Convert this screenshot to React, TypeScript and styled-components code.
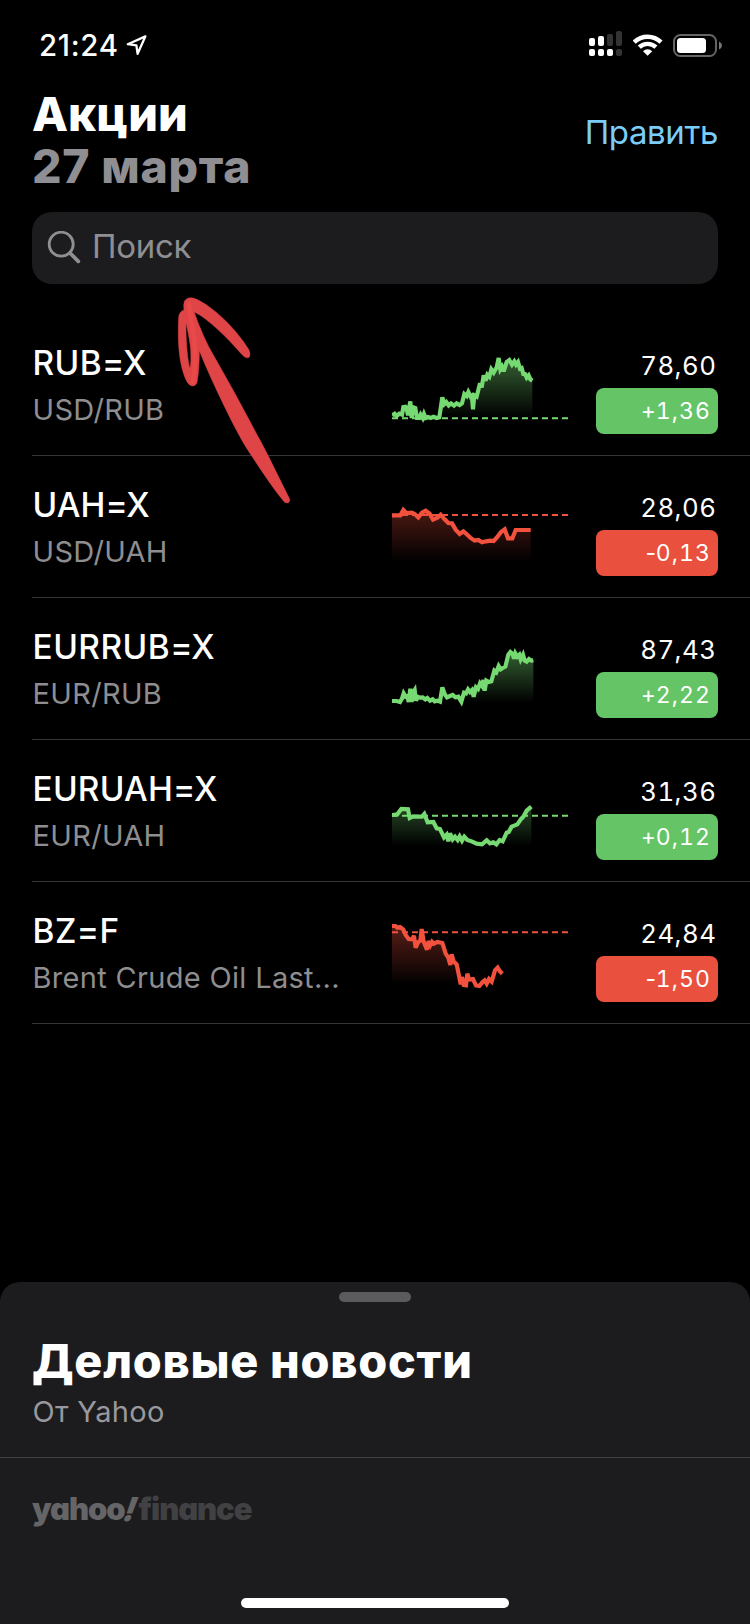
import React from "react";
import styled, { createGlobalStyle } from "styled-components";

const colors = {
  up: "#64c466",
  upLine: "#77d972",
  down: "#e9503d",
  downLine: "#f1513d",
  gray: "#8e8e93",
  subtle: "#8e8e90",
  divider: "#363638",
  panel: "#1c1c1e",
};

const GlobalStyle = createGlobalStyle`
  body {
    margin: 0;
    background: #000;
    color: #fff;
    font-family: Inter, "Liberation Sans", sans-serif;
  }
`;

const Screen = styled.div`
  position: relative;
  display: flex;
  flex-direction: column;
  width: 750px;
  height: 1624px;
  overflow: hidden;
  background: #000;
`;

const StatusBar = styled.div`
  display: flex;
  align-items: flex-start;
  height: 91px;
  box-sizing: border-box;
  padding: 25px 28px 0 39px;
`;

const Clock = styled.span`
  width: 79px;
  font-size: 29.4px;
  font-weight: 500;
  line-height: 41px;
  letter-spacing: 0.7px;
`;

const LocationIcon = styled.svg`
  margin: 10px 0 0 8px;
`;

const StatusIcons = styled.div`
  display: flex;
  align-items: flex-start;
  gap: 10px;
  margin-left: auto;
  padding-top: 5px;
`;

const Header = styled.header`
  display: flex;
  justify-content: space-between;
  height: 121px;
  padding: 0 32px;
`;

const Title = styled.h1`
  margin: -3px 0 0;
  font-size: 46.8px;
  font-weight: 800;
  line-height: 52px;
  letter-spacing: 0.1px;
`;

const DateLine = styled.span`
  display: block;
  color: ${colors.gray};
  font-size: 46.4px;
  letter-spacing: 0.75px;
`;

const EditButton = styled.button`
  align-self: flex-start;
  margin: 20px 0 0;
  padding: 0;
  border: 0;
  background: none;
  color: #7bcdf9;
  font: 400 33px/42px Inter, "Liberation Sans", sans-serif;
  letter-spacing: -0.4px;
`;

const SearchField = styled.div`
  display: flex;
  align-items: center;
  gap: 11px;
  height: 72px;
  margin: 0 32px 30px;
  padding-left: 15px;
  box-sizing: border-box;
  border-radius: 20px;
  background: ${colors.panel};
  color: ${colors.gray};
  font-size: 33px;
  line-height: 40px;
  letter-spacing: -0.3px;
`;

const SearchLabel = styled.span`
  margin-top: -5px;
`;

const List = styled.div`
  display: flex;
  flex-direction: column;
  padding-left: 32px;
`;

const Row = styled.div`
  display: flex;
  align-items: flex-start;
  height: 142px;
  box-sizing: border-box;
  border-bottom: 1px solid ${colors.divider};
`;

const Names = styled.div`
  flex: 1;
  padding: 28px 0 0 0.5px;
  white-space: nowrap;
`;

const Symbol = styled.div<{ $tracking: number }>`
  font-size: 33.4px;
  font-weight: 500;
  line-height: 42px;
  letter-spacing: ${(p) => p.$tracking}px;
`;

const Description = styled.div`
  margin-top: 8px;
  color: ${colors.subtle};
  font-size: 29px;
  line-height: 36px;
  letter-spacing: 0.32px;
`;

const Chart = styled.svg`
  flex: none;
  width: 178px;
  height: 110px;
  margin-top: 16px;
`;

const Quote = styled.div`
  display: flex;
  flex-direction: column;
  gap: 6px;
  width: 122px;
  margin: 36px 32px 0 26px;
  text-align: right;
  font-variant-numeric: tabular-nums;
`;

const Price = styled.div`
  padding-right: 1.5px;
  font-size: 25.8px;
  line-height: 32px;
  letter-spacing: 0.5px;
`;

const Badge = styled.div<{ $up: boolean }>`
  height: 46px;
  box-sizing: border-box;
  padding-right: 7px;
  border-radius: 8px;
  background: ${(p) => (p.$up ? colors.up : colors.down)};
  font-size: 23px;
  line-height: 46px;
  letter-spacing: 1.1px;
`;

const Sign = styled.span`
  margin-right: -1.5px;
  font-variant-numeric: proportional-nums;
`;

const Sheet = styled.section`
  display: flex;
  flex-direction: column;
  height: 342px;
  margin-top: auto;
  border-radius: 20px 20px 0 0;
  background: ${colors.panel};
`;

const Grabber = styled.div`
  align-self: center;
  width: 72px;
  height: 10px;
  margin-top: 10px;
  border-radius: 5px;
  background: #5b5b5d;
`;

const NewsHeader = styled.div`
  height: 156px;
  padding: 0 32px;
  box-sizing: border-box;
  border-bottom: 1px solid #414143;
`;

const NewsTitle = styled.h2`
  margin: 31px 0 0;
  font-size: 46.8px;
  font-weight: 800;
  line-height: 56px;
  letter-spacing: 0.75px;
`;

const NewsSource = styled.div`
  margin: 5px 0 0 0.5px;
  color: #98989d;
  font-size: 29px;
  line-height: 36px;
  letter-spacing: 0.3px;
`;

const YahooLogo = styled.div`
  display: flex;
  margin: 31px 0 0 32px;
  color: #656567;
  font-size: 31px;
  font-weight: 900;
  line-height: 40px;
  letter-spacing: -1.1px;
  font-feature-settings: "cv11";
`;

const Bang = styled.span`
  width: 14px;
  transform: skewX(-20deg) scaleY(1.06);
`;

const Finance = styled.span`
  color: #414143;
`;

const HomeIndicator = styled.div`
  align-self: center;
  width: 268px;
  height: 10px;
  margin: auto 0 16px;
  border-radius: 5px;
  background: #fff;
`;

const Annotation = styled.svg`
  position: absolute;
  left: 170px;
  top: 290px;
  width: 130px;
  height: 220px;
`;

interface Stock {
  symbol: string;
  tracking: number;
  description: string;
  price: string;
  change: string;
  up: boolean;
  top: number;
  base?: number;
  fadeTop: number;
  fadeEnd: number;
  line: string;
}

const stocks: Stock[] = [
  {
    symbol: "RUB=X",
    tracking: 0.4,
    description: "USD/RUB",
    price: "78,60",
    change: "+1,36",
    up: true,
    top: -30,
    base: 235,
    fadeTop: 50,
    fadeEnd: 232,
    line: "36,226 44,221 50,228 58,221 66,224 70,201 76,200 80,206 84,226 88,200 91,184 95,234 100,202 106,204 111,234 118,234 122,224 128,234 132,222 137,234 144,231 152,234 160,230 170,234 178,232 187,172 193,192 199,186 206,196 213,190 222,197 230,190 239,195 246,190 253,162 260,168 265,156 271,168 275,162 279,208 283,166 290,170 300,130 305,142 311,106 317,122 322,104 328,110 334,88 341,98 350,82 356,54 361,88 366,80 371,94 380,66 388,60 396,74 403,64 408,74 414,66 420,86 425,84 430,102 435,102 440,113 446,106 451,118 457,122",
  },
  {
    symbol: "UAH=X",
    tracking: 0.15,
    description: "USD/UAH",
    price: "28,06",
    change: "-0,13",
    up: false,
    top: -24,
    base: 105,
    fadeTop: 20,
    fadeEnd: 245,
    line: "36,106 61,106 70,90 79,99 95,98 104,102 115,112 126,98 137,92 149,101 159,119 172,113 182,104 194,118 205,129 216,130 227,149 239,162 250,154 262,164 272,174 284,182 295,180 306,187 318,184 330,182 341,183 352,171 363,156 374,148 384,175 397,175 407,150 452,150",
  },
  {
    symbol: "EURRUB=X",
    tracking: 0.5,
    description: "EUR/RUB",
    price: "87,43",
    change: "+2,22",
    up: true,
    top: -48,
    fadeTop: 60,
    fadeEnd: 218,
    line: "36,213 50,213 60,216 66,206 71,190 77,200 82,198 86,216 91,176 95,216 99,188 104,180 108,212 113,200 120,203 128,202 136,208 142,204 150,212 158,208 164,214 172,212 180,215 187,172 194,192 201,202 210,198 218,195 226,202 235,200 244,215 252,188 258,190 264,178 270,186 276,180 281,200 288,172 294,177 300,160 306,168 310,150 314,182 319,152 326,156 334,154 343,122 349,127 356,108 362,118 368,114 376,110 385,74 391,66 398,72 402,86 406,70 412,80 418,74 422,88 429,74 434,92 440,95 447,87 454,92 460,91",
  },
  {
    symbol: "EURUAH=X",
    tracking: 0.25,
    description: "EUR/UAH",
    price: "31,36",
    change: "+0,12",
    up: true,
    top: -72,
    base: 107,
    fadeTop: 30,
    fadeEnd: 198,
    line: "36,105 52,103 64,87 84,88 89,114 98,110 126,110 133,102 143,127 160,126 170,145 180,147 192,172 200,164 205,184 210,160 218,178 225,170 233,180 239,169 246,182 253,170 262,180 275,184 290,191 306,193 320,181 330,190 340,187 349,193 359,180 368,184 380,158 386,156 395,140 412,133 424,116 430,110 440,92 454,80",
  },
  {
    symbol: "BZ=F",
    tracking: 0.45,
    description: "Brent Crude Oil Last...",
    price: "24,84",
    change: "-1,50",
    up: false,
    top: -21,
    base: 82,
    fadeTop: 20,
    fadeEnd: 240,
    line: "36,63 46,63 52,68 60,66 70,74 77,90 86,102 97,103 102,92 107,128 114,112 121,106 125,72 131,110 141,134 146,108 151,120 156,110 162,116 172,111 187,114 197,146 205,158 211,180 215,148 221,170 230,178 239,222 242,238 246,216 251,240 258,241 262,206 267,224 279,222 288,241 298,243 307,232 314,226 320,236 327,222 335,230 345,196 353,188 360,199 367,206",
  },
];

function Spark({ stock }: { stock: Stock }) {
  const id = `fade-${stock.symbol.replace("=", "-")}`;
  const stroke = stock.up ? colors.upLine : colors.downLine;
  const lastX = stock.line.split(" ").pop()!.split(",")[0];
  return (
    <Chart viewBox={`36 ${stock.top} 534 330`}>
      <defs>
        <linearGradient id={id} gradientUnits="userSpaceOnUse" x1="0" x2="0" y1={stock.fadeTop} y2={stock.fadeEnd}>
          <stop offset="0" stopColor={stroke} stopOpacity="0.46" />
          <stop offset="1" stopColor={stroke} stopOpacity="0" />
        </linearGradient>
      </defs>
      <polygon fill={`url(#${id})`} points={`36,${stock.fadeEnd} ${stock.line} ${lastX},${stock.fadeEnd}`} />
      {stock.base !== undefined && (
        <line x1="36" x2="564" y1={stock.base} y2={stock.base} stroke={stroke} strokeWidth="6" strokeDasharray="18 12" />
      )}
      <polyline points={stock.line} fill="none" stroke={stroke} strokeWidth="12.5" strokeLinejoin="miter" strokeMiterlimit="3" />
    </Chart>
  );
}

function CellularIcon() {
  return (
    <svg width="34" height="26" viewBox="0 0 34 26" fill="#fff">
      <rect x="0" y="8" width="6" height="8" rx="2" />
      <rect x="9" y="6" width="6" height="10" rx="2" />
      <rect x="18" y="4" width="6" height="12" rx="2" fill="#333" />
      <rect x="27" y="1" width="6" height="15" rx="2" fill="#333" />
      <rect x="0" y="19" width="6" height="7" rx="2" />
      <rect x="9" y="19" width="6" height="7" rx="2" />
      <rect x="18" y="19" width="6" height="7" rx="2" />
      <rect x="27" y="19" width="6" height="7" rx="2" fill="#333" />
    </svg>
  );
}

function WifiIcon() {
  return (
    <svg width="30" height="26" viewBox="0 0 30 26">
      <g fill="none" stroke="#fff" strokeWidth="4.4">
        <path d="M1.2 12.2A19.2 19.2 0 0 1 28 12.2" />
        <path d="M6.3 17.2A12 12 0 0 1 22.9 17.2" />
      </g>
      <path d="M10 21.2A6.6 6.6 0 0 1 19.2 21.2L14.6 25.8Z" fill="#fff" />
    </svg>
  );
}

function BatteryIcon() {
  return (
    <svg width="49" height="28" viewBox="0 0 49 28">
      <rect x="1" y="5" width="42" height="21" rx="6.5" fill="none" stroke="#656565" strokeWidth="2" />
      <rect x="4" y="8" width="29" height="15" rx="3.5" fill="#fff" />
      <path d="M46 11.5Q49 13 49 15.5T46 19.5Z" fill="#777" />
    </svg>
  );
}

export default function App() {
  return (
    <>
      <GlobalStyle />
      <Screen>
        <StatusBar>
          <Clock>21:24</Clock>
          <LocationIcon width="21" height="21" viewBox="0 0 21 21">
            <path d="M19.4 1.4L1.8 9.2L10.4 10.4L11.6 18.8Z" fill="none" stroke="#fff" strokeWidth="2.3" strokeLinejoin="round" />
          </LocationIcon>
          <StatusIcons>
            <CellularIcon />
            <WifiIcon />
            <BatteryIcon />
          </StatusIcons>
        </StatusBar>

        <Header>
          <Title>
            Акции
            <DateLine>27 марта</DateLine>
          </Title>
          <EditButton>Править</EditButton>
        </Header>

        <SearchField>
          <svg width="34" height="34" viewBox="0 0 34 34" fill="none" stroke={colors.gray}>
            <circle cx="14.2" cy="13.2" r="12" strokeWidth="2.8" />
            <path d="M23 22L31.3 30.3" strokeWidth="3.8" strokeLinecap="round" />
          </svg>
          <SearchLabel>Поиск</SearchLabel>
        </SearchField>

        <List>
          {stocks.map((stock) => (
            <Row key={stock.symbol}>
              <Names>
                <Symbol $tracking={stock.tracking}>{stock.symbol}</Symbol>
                <Description>{stock.description}</Description>
              </Names>
              <Spark stock={stock} />
              <Quote>
                <Price>{stock.price}</Price>
                <Badge $up={stock.up}>
                  <Sign>{stock.change[0]}</Sign>
                  {stock.change.slice(1)}
                </Badge>
              </Quote>
            </Row>
          ))}
        </List>

        <Sheet>
          <Grabber />
          <NewsHeader>
            <NewsTitle>Деловые новости</NewsTitle>
            <NewsSource>От Yahoo</NewsSource>
          </NewsHeader>
          <YahooLogo>
            <span>yahoo</span>
            <Bang>!</Bang>
            <Finance>finance</Finance>
          </YahooLogo>
          <HomeIndicator />
        </Sheet>

        <Annotation viewBox="510 0 390 660">
          <path
            d="M853 636Q862 642 868 635Q871 630 867 623C835 560 800 485 772 436C730 355 680 265 635 186C612 145 590 90 583 66C625 86 685 146 728 196Q740 208 748 201Q753 192 746 178C710 120 650 60 600 33Q566 13 553 34Q550 45 552 60Q538 64 536 82C533 130 535 190 545 230C553 262 563 287 577 288Q590 288 592 272C597 240 598 210 598 182C625 250 690 390 738 472C780 535 815 590 853 636Z
               M558 98C561 112 570 151 572 180C573 205 573 222 570 234C563 215 557 150 558 98Z"
            fill="#df4447"
            fillRule="evenodd"
            stroke="#df4447"
            strokeWidth="1.5"
            strokeLinejoin="round"
          />
          <path d="M567 42C571 90 585 130 585 190C585 220 584 250 579 275" fill="none" stroke="#e94a49" strokeWidth="14" strokeLinecap="round" />
        </Annotation>
      </Screen>
    </>
  );
}
